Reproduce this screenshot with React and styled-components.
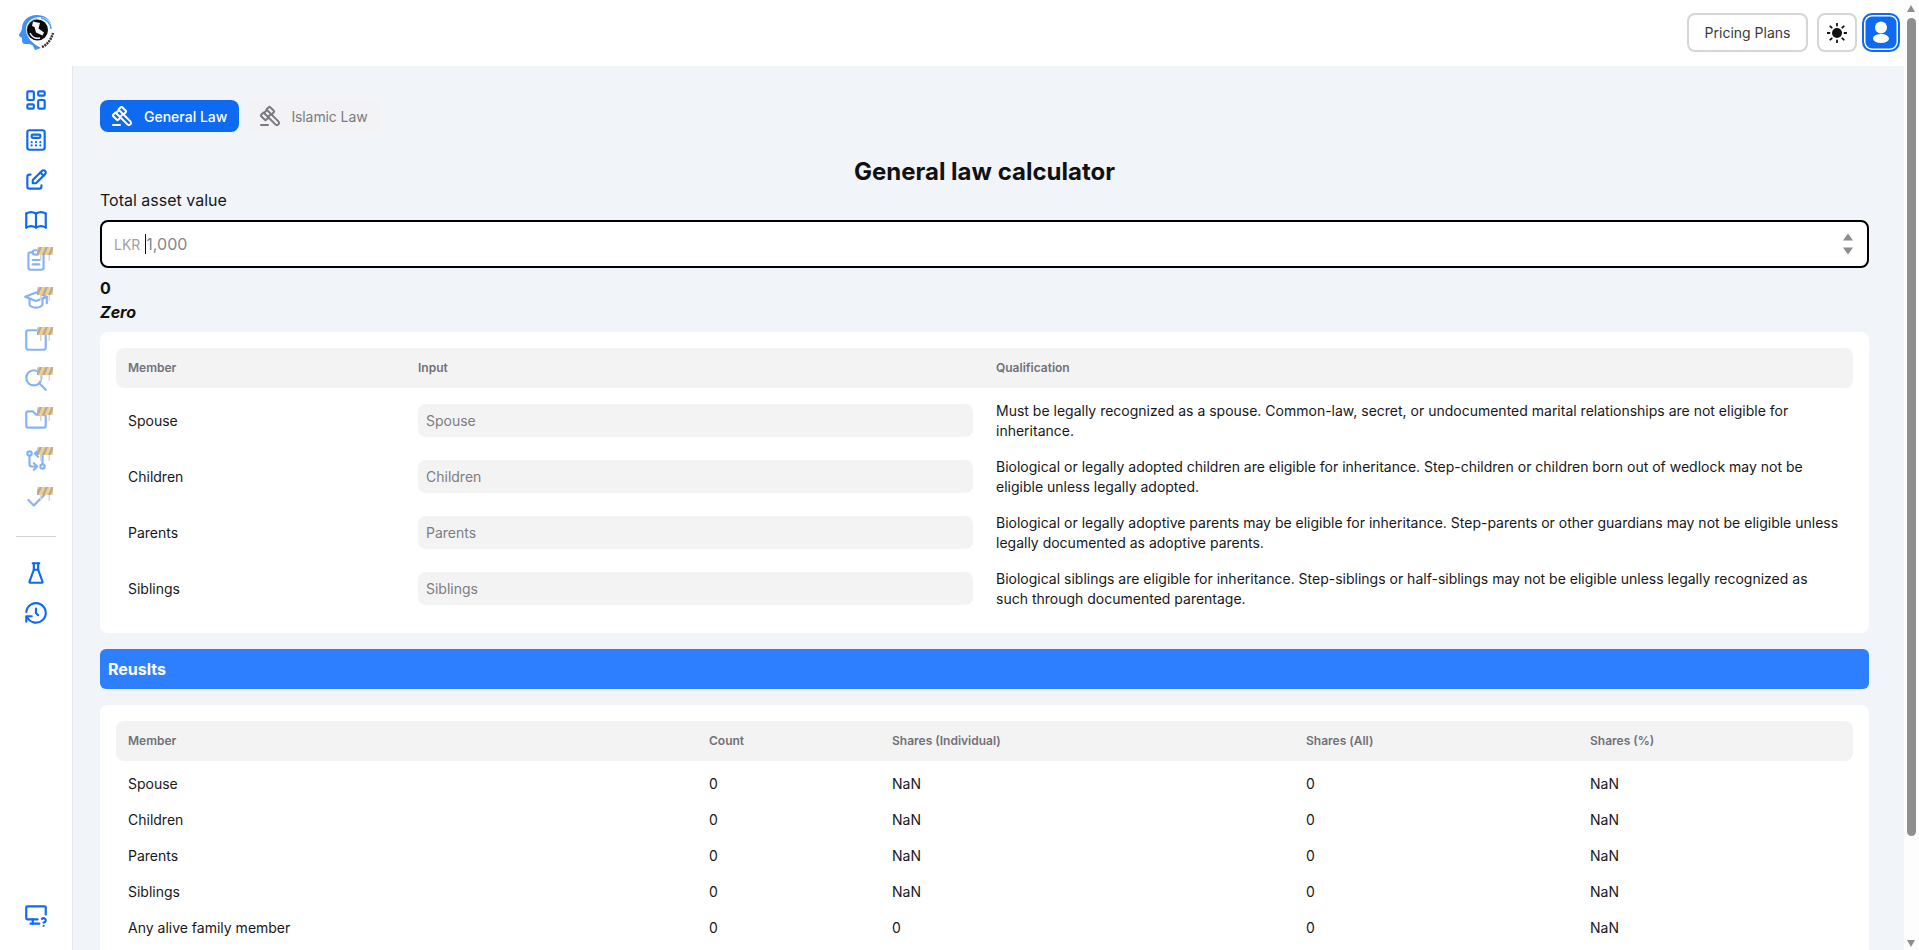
import styled, { createGlobalStyle } from 'styled-components';
import {
  TbLayoutDashboard,
  TbCalculator,
  TbEdit,
  TbBook,
  TbClipboardText,
  TbSchool,
  TbSquare,
  TbSearch,
  TbFolder,
  TbGitCompare,
  TbCheck,
  TbFlask,
  TbHistory,
  TbDeviceDesktopQuestion,
  TbGavel,
} from 'react-icons/tb';

const navItems = [
  { icon: TbLayoutDashboard },
  { icon: TbCalculator },
  { icon: TbEdit },
  { icon: TbBook },
  { icon: TbClipboardText, soon: true },
  { icon: TbSchool, soon: true },
  { icon: TbSquare, soon: true },
  { icon: TbSearch, soon: true },
  { icon: TbFolder, soon: true },
  { icon: TbGitCompare, soon: true },
  { icon: TbCheck, soon: true },
];

const members = [
  {
    name: 'Spouse',
    text: 'Must be legally recognized as a spouse. Common-law, secret, or undocumented marital relationships are not eligible for inheritance.',
  },
  {
    name: 'Children',
    text: 'Biological or legally adopted children are eligible for inheritance. Step-children or children born out of wedlock may not be eligible unless legally adopted.',
  },
  {
    name: 'Parents',
    text: 'Biological or legally adoptive parents may be eligible for inheritance. Step-parents or other guardians may not be eligible unless legally documented as adoptive parents.',
  },
  {
    name: 'Siblings',
    text: 'Biological siblings are eligible for inheritance. Step-siblings or half-siblings may not be eligible unless legally recognized as such through documented parentage.',
  },
];

const results = [
  ['Spouse', '0', 'NaN', '0', 'NaN'],
  ['Children', '0', 'NaN', '0', 'NaN'],
  ['Parents', '0', 'NaN', '0', 'NaN'],
  ['Siblings', '0', 'NaN', '0', 'NaN'],
  ['Any alive family member', '0', '0', '0', 'NaN'],
];

const memberCols = '290px 578px 1fr';
const resultCols = '581px 183px 414px 284px 1fr';

const Barricade = () => (
  <BarricadeSvg viewBox="0 0 16 14">
    <rect x="3" y="6" width="1.500" height="8" fill="#d6d6d6" />
    <rect x="11.500" y="6" width="1.500" height="8" fill="#d6d6d6" />
    <rect x="0" y="0" width="16" height="8" rx="1" fill="#f4cf83" />
    <path d="M2.500 0h2.500L1.500 8H0V5zM8.500 0H11L7.500 8H5zM14.500 0H16v2.500L13.500 8H11z" fill="#ababab" />
  </BarricadeSvg>
);

const Logo = () => (
  <svg width="36" height="36" viewBox="0 0 36 36">
    <path
      d="M18 0C8 0 3 7 3 13c0 3-3 6-3 7 0 2 3 2 3 3 0 3 0 6 3 6s7 0 8 2l2 4 6-2C14 29 6 22 7 13 8 6 14 2 20 2c6 0 11 3 13 8C31 4 25 0 18 0z"
      fill="#3f92f2"
    />
    <path d="M10 22C6 15 9 6 18 3.500" fill="none" stroke="#8cc0f8" strokeWidth="1.500" />
    <path d="M22 3c6 1 10 6 10 11" fill="none" stroke="#4a9bf5" strokeWidth="1.500" />
    <circle cx="18.500" cy="15" r="10.500" fill="#0b0b0b" />
    <path d="M14 6.500l7 1.500-1.500 5.500 5.500 4-1.500 3-6.500-3-1.500-5.500-2.500-1z" fill="#f4f4f4" />
    <path d="M11 18c2 4 6 6 10 5" fill="none" stroke="#f4f4f4" strokeWidth="1.500" />
    <path
      d="M23 32c5-2 9-7 11-14"
      fill="none"
      stroke="#333"
      strokeWidth="2.500"
      strokeDasharray="2 0.800"
    />
  </svg>
);

const App = () => (
  <>
    <GlobalStyle />
    <Shell>
      <Sidebar>
        <LogoSlot>
          <Logo />
        </LogoSlot>
        <NavList>
          {navItems.map(({ icon: Icon, soon }, i) => (
            <NavItem key={i}>
              <NavIcon $soon={soon}>
                <Icon size={26} />
              </NavIcon>
              {soon && <Barricade />}
            </NavItem>
          ))}
          <NavDivider />
          <NavItem>
            <TbFlask size={26} />
          </NavItem>
          <NavItem>
            <TbHistory size={26} />
          </NavItem>
        </NavList>
        <SidebarFoot>
          <TbDeviceDesktopQuestion size={26} />
        </SidebarFoot>
      </Sidebar>
      <Body>
        <TopBar>
          <PricingBtn>Pricing Plans</PricingBtn>
          <IconBtn>
            <svg width="20" height="20" viewBox="0 0 20 20" fill="#111">
              <circle cx="10" cy="10" r="5" />
              <path
                d="M10 0.500v2M10 17.500v2M0.500 10h2M17.500 10h2M3.300 3.300l1.400 1.400M15.300 15.300l1.400 1.400M3.300 16.700l1.400-1.400M15.300 4.700l1.400-1.400"
                stroke="#111"
                strokeWidth="1.800"
                strokeLinecap="round"
              />
            </svg>
          </IconBtn>
          <AvatarBtn>
            <svg width="22" height="27" viewBox="0 0 22 27" fill="#fff">
              <circle cx="11" cy="8.500" r="6" />
              <ellipse cx="11" cy="19.500" rx="8" ry="4.500" />
            </svg>
          </AvatarBtn>
        </TopBar>
        <Main>
          <Tabs>
            <Tab $active>
              <TbGavel size={24} />
              General Law
            </Tab>
            <Tab>
              <TbGavel size={24} />
              Islamic Law
            </Tab>
          </Tabs>
          <Title>General law calculator</Title>
          <FieldLabel>Total asset value</FieldLabel>
          <AmountField>
            <Prefix>LKR</Prefix>
            <Caret />
            <Placeholder>1,000</Placeholder>
            <Spinner>
              <SpinUp />
              <SpinDown />
            </Spinner>
          </AmountField>
          <Amount>0</Amount>
          <AmountWords>Zero</AmountWords>
          <Card>
            <HeadRow $cols={memberCols}>
              <span>Member</span>
              <span>Input</span>
              <span>Qualification</span>
            </HeadRow>
            <MemberRows>
              {members.map((m) => (
                <MemberRow key={m.name} $cols={memberCols}>
                  <span>{m.name}</span>
                  <MemberInput>{m.name}</MemberInput>
                  <Qualification>{m.text}</Qualification>
                </MemberRow>
              ))}
            </MemberRows>
          </Card>
          <ResultsBar>Reuslts</ResultsBar>
          <ResultsCard>
            <HeadRow $cols={resultCols}>
              <span>Member</span>
              <span>Count</span>
              <span>Shares (Individual)</span>
              <span>Shares (All)</span>
              <span>Shares (%)</span>
            </HeadRow>
            <ResultRows>
              {results.map((row) => (
                <ResultRow key={row[0]} $cols={resultCols}>
                  {row.map((cell, i) => (
                    <span key={i}>{cell}</span>
                  ))}
                </ResultRow>
              ))}
            </ResultRows>
          </ResultsCard>
        </Main>
      </Body>
    </Shell>
    <FakeScrollbar>
      <ArrowUp />
      <Thumb />
      <ArrowDown />
    </FakeScrollbar>
  </>
);

export default App;

const GlobalStyle = createGlobalStyle`
  * {
    box-sizing: border-box;
  }
  body {
    margin: 0;
    font-family: Inter, 'Liberation Sans', sans-serif;
    font-size: 14px;
    color: #111827;
    background: #f1f4f9;
  }
`;

const Shell = styled.div`
  display: flex;
  min-height: 1063px;
`;

const Sidebar = styled.aside`
  position: sticky;
  top: 0;
  flex: 0 0 73px;
  height: 950px;
  display: flex;
  flex-direction: column;
  background: #fff;
  border-right: 1px solid #e5e8ee;
  color: #0f6af2;
`;

const LogoSlot = styled.div`
  height: 66px;
  padding: 15px 0 0 19px;
  margin-right: -1px;
  background: #fff;
`;

const NavList = styled.nav`
  margin-top: 14px;
  display: flex;
  flex-direction: column;
  align-items: center;
`;

const NavItem = styled.div`
  position: relative;
  width: 40px;
  height: 40px;
  display: flex;
  align-items: center;
  justify-content: center;
`;

const NavIcon = styled.span`
  display: flex;
  opacity: ${({ $soon }) => ($soon ? 0.5 : 1)};
`;

const BarricadeSvg = styled.svg`
  position: absolute;
  top: 7px;
  right: 3px;
  width: 16px;
  height: 14px;
`;

const NavDivider = styled.div`
  width: 40px;
  height: 1px;
  margin: 16px 0;
  background: #d5d5d5;
`;

const SidebarFoot = styled.div`
  margin-top: auto;
  height: 40px;
  margin-bottom: 15px;
  display: flex;
  align-items: center;
  justify-content: center;
`;

const Body = styled.div`
  flex: 1;
  min-width: 0;
`;

const TopBar = styled.header`
  height: 66px;
  display: flex;
  align-items: flex-start;
  justify-content: flex-end;
  gap: 5px;
  padding: 13px 19px 0 0;
  background: #fff;
`;

const PricingBtn = styled.button`
  height: 39px;
  width: 121px;
  margin-right: 4px;
  padding: 0;
  border: 2px solid #d6d6d6;
  border-radius: 8px;
  background: #fff;
  font: 400 14px Inter, sans-serif;
  color: #3a3a40;
`;

const IconBtn = styled.button`
  width: 40px;
  height: 39px;
  padding: 0;
  display: flex;
  align-items: center;
  justify-content: center;
  border: 2px solid #d6d6d6;
  border-radius: 8px;
  background: #fff;
`;

const AvatarBtn = styled.button`
  width: 38px;
  height: 39px;
  padding: 0;
  display: flex;
  align-items: center;
  justify-content: center;
  border: 2px solid #0f6af2;
  border-radius: 10px;
  box-shadow: inset 0 0 0 1.500px #fff;
  background: #0f6af2;
`;

const Main = styled.main`
  padding: 32px 50px 40px 27px;
`;

const Tabs = styled.div`
  display: flex;
  align-items: center;
  gap: 8px;
`;

const Tab = styled.div`
  height: ${({ $active }) => ($active ? '32px' : '36px')};
  display: flex;
  align-items: center;
  gap: ${({ $active }) => ($active ? '10px' : '9px')};
  padding: ${({ $active }) => ($active ? '0 12px 0 10px' : '0 13px 0 11px')};
  border-radius: 8px;
  font-size: 14px;
  letter-spacing: ${({ $active }) => ($active ? 0 : '-0.1px')};
  font-weight: ${({ $active }) => ($active ? 500 : 400)};
  background: ${({ $active }) => ($active ? '#0f6af2' : '#f3f3f5')};
  color: ${({ $active }) => ($active ? '#fff' : '#7a7a80')};
`;

const Title = styled.h1`
  margin: 22px 0 0;
  text-align: center;
  font-size: 24px;
  line-height: 32px;
  font-weight: 700;
  color: #111;
`;

const FieldLabel = styled.div`
  font-size: 16px;
  line-height: 24px;
  color: #18181b;
`;

const AmountField = styled.div`
  position: relative;
  height: 48px;
  margin-top: 8px;
  display: flex;
  align-items: center;
  padding-left: 12px;
  background: #fff;
  border: 2px solid #000;
  border-radius: 8px;
`;

const Prefix = styled.span`
  font-size: 14px;
  color: #a1a1a6;
`;

const Caret = styled.span`
  width: 1px;
  height: 20px;
  margin-left: 5px;
  background: #111;
`;

const Placeholder = styled.span`
  font-size: 16px;
  color: #7f8790;
`;

const Spinner = styled.div`
  position: absolute;
  top: 50%;
  right: 14px;
  transform: translateY(-50%);
  display: flex;
  flex-direction: column;
  gap: 7px;
`;

const SpinUp = styled.span`
  width: 0;
  height: 0;
  border-left: 5px solid transparent;
  border-right: 5px solid transparent;
  border-bottom: 7px solid #8d8d8d;
`;

const SpinDown = styled.span`
  width: 0;
  height: 0;
  border-left: 5px solid transparent;
  border-right: 5px solid transparent;
  border-top: 7px solid #8d8d8d;
`;

const Amount = styled.div`
  margin-top: 8px;
  font-size: 16px;
  line-height: 24px;
  font-weight: 700;
  color: #111;
`;

const AmountWords = styled.div`
  font-size: 16px;
  line-height: 24px;
  font-weight: 700;
  font-style: italic;
  color: #111;
`;

const Card = styled.section`
  margin-top: 8px;
  padding: 16px;
  background: #fff;
  border-radius: 8px;
`;

const ResultsCard = styled(Card)`
  margin-top: 16px;
`;

const HeadRow = styled.div`
  display: grid;
  grid-template-columns: ${({ $cols }) => $cols};
  align-items: center;
  height: 40px;
  padding: 0 12px 1px;
  background: #f3f3f3;
  border-radius: 8px;
  font-size: 12px;
  font-weight: 600;
  color: #71717a;
`;

const MemberRows = styled.div`
  padding: 4px 0 1px;
`;

const MemberRow = styled.div`
  display: grid;
  grid-template-columns: ${({ $cols }) => $cols};
  align-items: center;
  height: 56px;
  padding: 0 12px;
  color: #18181b;
`;

const MemberInput = styled.div`
  width: 555px;
  height: 33px;
  display: flex;
  align-items: center;
  padding: 0 8px;
  background: #f3f3f3;
  border-radius: 8px;
  color: #7d7d82;
`;

const Qualification = styled.p`
  margin: 1px 0 0;
  line-height: 20px;
`;

const ResultsBar = styled.div`
  height: 40px;
  margin-top: 16px;
  display: flex;
  align-items: center;
  padding-left: 8px;
  background: #2d7fff;
  border-radius: 6px;
  font-size: 16px;
  font-weight: 700;
  color: #fff;
`;

const ResultRows = styled.div`
  padding-top: 4px;
`;

const ResultRow = styled.div`
  display: grid;
  grid-template-columns: ${({ $cols }) => $cols};
  align-items: center;
  height: 36px;
  padding: 0 12px;
  color: #18181b;
`;

const FakeScrollbar = styled.div`
  position: fixed;
  top: 0;
  right: 0;
  bottom: 0;
  width: 15px;
  background: #fdfdfd;
`;

const Thumb = styled.div`
  position: absolute;
  top: 18px;
  left: 3px;
  width: 9px;
  height: 818px;
  border-radius: 5px;
  background: #8f8f8f;
`;

const ArrowUp = styled.div`
  position: absolute;
  top: 5px;
  left: 3px;
  width: 0;
  height: 0;
  border-left: 4.500px solid transparent;
  border-right: 4.500px solid transparent;
  border-bottom: 7px solid #8f8f8f;
`;

const ArrowDown = styled.div`
  position: absolute;
  bottom: 3px;
  left: 3px;
  width: 0;
  height: 0;
  border-left: 4.500px solid transparent;
  border-right: 4.500px solid transparent;
  border-top: 7px solid #8f8f8f;
`;
